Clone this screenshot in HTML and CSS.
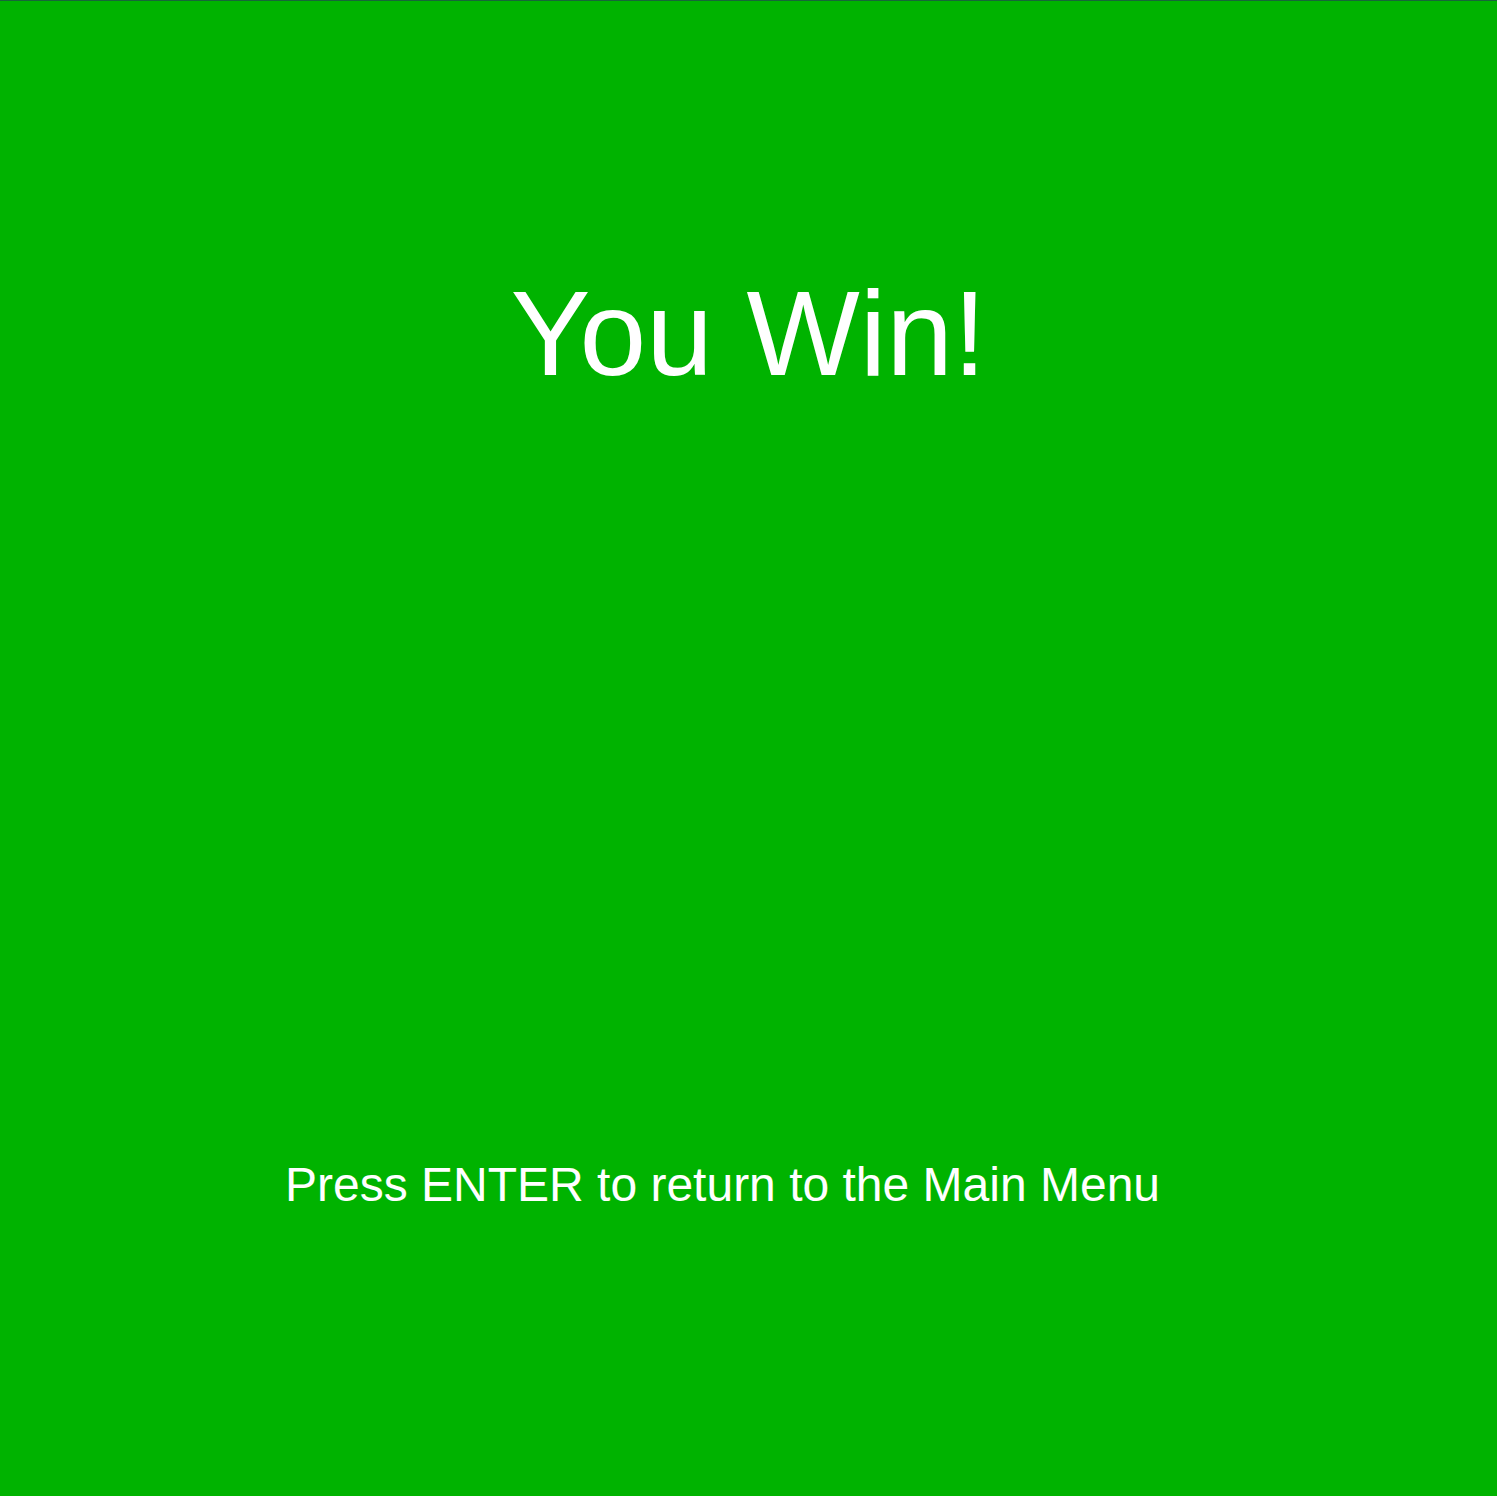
FILE: index.html
```html
<!DOCTYPE html>
<html>
<head>
<meta charset="utf-8">
<link rel="stylesheet" href="styles.css">
</head>
<body>
<main class="screen">
  <h1 class="title">You Win!</h1>
  <p class="hint">Press ENTER to return to the Main Menu</p>
</main>
</body>
</html>
```
FILE: styles.css
```css
html, body {
  margin: 0;
  padding: 0;
  height: 100%;
}
body {
  background: #00b300;
  font-family: "Liberation Sans", Arial, sans-serif;
  color: #ffffff;
}
.screen {
  box-sizing: border-box;
  height: 1496px;
  border-top: 1px solid #17663a;
  display: flex;
  flex-direction: column;
}
.title {
  margin: 0;
  padding-top: 263px;
  font-size: 120px;
  font-weight: normal;
  line-height: 138px;
  text-align: center;
}
.hint {
  margin: 0;
  padding-top: 755px;
  padding-left: 285px;
  font-size: 48px;
  line-height: 55px;
}
```
